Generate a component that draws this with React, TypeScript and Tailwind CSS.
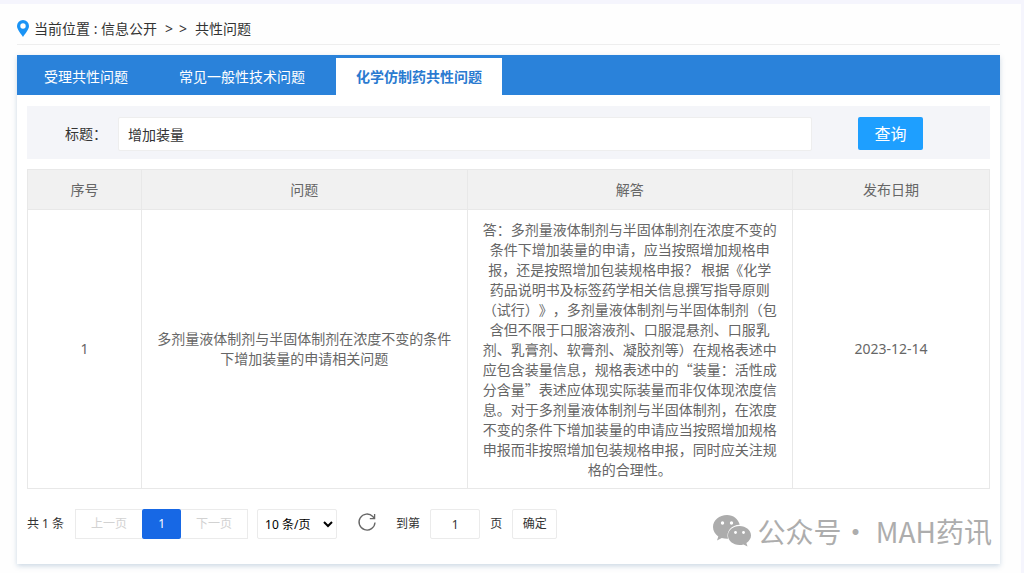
import { useState } from 'react';

interface QuestionRow {
  id: number;
  question: string;
  answer: string;
  publishDate: string;
}

const tabs = ['受理共性问题', '常见一般性技术问题', '化学仿制药共性问题'];

const rows: QuestionRow[] = [
  {
    id: 1,
    question: '多剂量液体制剂与半固体制剂在浓度不变的条件下增加装量的申请相关问题',
    answer:
      '答：多剂量液体制剂与半固体制剂在浓度不变的条件下增加装量的申请，应当按照增加规格申报，还是按照增加包装规格申报？ 根据《化学药品说明书及标签药学相关信息撰写指导原则（试行）》，多剂量液体制剂与半固体制剂（包含但不限于口服溶液剂、口服混悬剂、口服乳剂、乳膏剂、软膏剂、凝胶剂等）在规格表述中应包含装量信息，规格表述中的“装量：活性成分含量”表述应体现实际装量而非仅体现浓度信息。对于多剂量液体制剂与半固体制剂，在浓度不变的条件下增加装量的申请应当按照增加规格申报而非按照增加包装规格申报，同时应关注规格的合理性。',
    publishDate: '2023-12-14',
  },
];

function Breadcrumb() {
  return (
    <nav className="flex h-10 items-center border-b border-[#eeeeee] pt-2 text-sm text-[#333333]">
      <svg width="12" height="17" viewBox="0 0 12 17" className="mr-[5px]" aria-hidden="true">
        <path
          fillRule="evenodd"
          fill="#1a93f5"
          d="M6 0a6 6 0 0 1 6 6c0 3.6-4.2 8-6 11C4.200 14 0 9.600 0 6a6 6 0 0 1 6-6zm0 3.300a2.700 2.700 0 1 0 0 5.400 2.700 2.700 0 0 0 0-5.400z"
        />
      </svg>
      <span>当前位置 :&nbsp;</span>
      <a href="#info">信息公开</a>
      <span className="mx-2 flex gap-1.5">
        <span>&gt;</span>
        <span>&gt;</span>
      </span>
      <a href="#common">共性问题</a>
    </nav>
  );
}

function Pagination() {
  const [page, setPage] = useState('1');
  const [size, setSize] = useState('10');

  return (
    <div className="mt-5 flex h-[30px] items-center text-xs text-[#333333]">
      <span>共 1 条</span>
      <div className="ml-[11px] flex h-full">
        <button type="button" disabled className="w-[67px] border border-r-0 border-[#ebebeb] text-[#d2d2d2]">
          上一页
        </button>
        <button type="button" aria-current="page" className="w-[39px] rounded-xs bg-[#1768e5] text-white">
          1
        </button>
        <button type="button" disabled className="w-[67px] border border-l-0 border-[#ebebeb] text-[#d2d2d2]">
          下一页
        </button>
      </div>
      <select
        aria-label="每页条数"
        value={size}
        onChange={(e) => setSize(e.target.value)}
        className="ml-[9px] h-full w-20 rounded-xs border border-[#ebebeb] bg-white px-[3px] text-black"
      >
        <option value="10">10 条/页</option>
        <option value="20">20 条/页</option>
        <option value="50">50 条/页</option>
      </select>
      <button type="button" aria-label="刷新" className="mb-1 ml-5">
        <svg width="20" height="20" viewBox="0 0 20 20" fill="none" stroke="#666666" strokeWidth="1.3">
          <path d="M18 10.500A8 8 0 1 1 15.800 4.500L17.300 6.200" />
          <path d="M17.600 2v4.700h-4.800" />
        </svg>
      </button>
      <label htmlFor="jumpPage" className="ml-[19px]">
        到第
      </label>
      <input
        id="jumpPage"
        type="text"
        value={page}
        onChange={(e) => setPage(e.target.value)}
        className="mx-[10px] h-full w-[50px] rounded-xs border border-[#ebebeb] bg-white text-center"
      />
      <span>页</span>
      <button type="button" className="ml-[10px] h-full w-[45px] rounded-xs border border-[#ebebeb] bg-white">
        确定
      </button>
    </div>
  );
}

function Watermark() {
  return (
    <div className="absolute right-2 bottom-[13px] flex items-center font-['Noto_Sans_CJK_SC',sans-serif] text-[28px] leading-10 text-[#adadad]">
      <svg width="38" height="32" viewBox="0 0 38 32" className="mr-[7px]" aria-hidden="true">
        <path
          fill="#acacac"
          d="M14 0C6.300 0 0 5.200 0 12c0 3.900 2 7.200 5.300 9.500L4 25.500l4.800-2.500c1.700.5 3.400.8 5.200.8h1C12.800 16.500 18.500 10 26.700 9.800 25.500 4.200 20.300 0 14 0z"
        />
        <path
          fill="#acacac"
          d="M26.500 11C20 11 15 15.300 15 20.500S20 30 26.500 30c1.400 0 2.800-.2 4-.6L34.500 31.500l-1.100-3.600c2.800-1.800 4.600-4.500 4.600-7.400C38 15.300 33 11 26.500 11z"
        />
        <g fill="#ffffff">
          <circle cx="9.500" cy="8" r="1.700" />
          <circle cx="18.500" cy="8" r="1.700" />
          <circle cx="22.500" cy="17.500" r="1.400" />
          <circle cx="30.500" cy="17.500" r="1.400" />
        </g>
      </svg>
      <span>公众号· MAH药讯</span>
    </div>
  );
}

export default function App() {
  const [activeTab, setActiveTab] = useState(2);
  const [title, setTitle] = useState('增加装量');

  return (
    <div
      lang="zh-CN"
      className="bg-[#f5f5fd] pt-1 pr-[3px] font-['Noto_Sans','Noto_Sans_CJK_SC',sans-serif]"
    >
      <div className="bg-[#fefefe] pt-[1px] pr-[21px] pb-[10px] pl-[17px]">
        <Breadcrumb />

        <main className="relative mt-[10px] bg-white pb-[25px] shadow-[0_2px_5px_rgba(90,130,170,0.3)]">
          <div role="tablist" className="flex h-10 items-end gap-[11px] bg-[#2a82da] pl-[7px]">
            {tabs.map((tab, i) => (
              <button
                key={tab}
                type="button"
                role="tab"
                aria-selected={activeTab === i}
                onClick={() => setActiveTab(i)}
                className={`h-[37px] px-5 text-sm ${
                  activeTab === i ? 'bg-white font-bold text-[#2a7ad0]' : 'text-white'
                }`}
              >
                {tab}
              </button>
            ))}
          </div>

          <div className="px-[10px]">
            <form
              onSubmit={(e) => e.preventDefault()}
              className="mt-[11px] flex h-[53px] items-center bg-[#f4f5f9] pt-[2px] pr-[67px] pl-[38px] text-sm text-[#333333]"
            >
              <label htmlFor="title" className="w-[53px]">
                标题：
              </label>
              <input
                id="title"
                type="text"
                value={title}
                onChange={(e) => setTitle(e.target.value)}
                className="h-[34px] min-w-0 flex-1 rounded-xs border border-[#eeeeee] bg-white px-[9px]"
              />
              <button type="submit" className="ml-[46px] h-[33px] w-[65px] rounded-xs bg-[#1e9fff] text-base text-white">
                查询
              </button>
            </form>

            <table className="mt-[10px] w-full table-fixed border-collapse text-center text-sm text-[#666666]">
              <colgroup>
                <col className="w-[114px]" />
                <col />
                <col />
                <col className="w-[197px]" />
              </colgroup>
              <thead>
                <tr className="h-10 bg-[#f1f1f1]">
                  <th className="border border-[#e8e8e8] font-normal">序号</th>
                  <th className="border border-[#e8e8e8] font-normal">问题</th>
                  <th className="border border-[#e8e8e8] font-normal">解答</th>
                  <th className="border border-[#e8e8e8] font-normal">发布日期</th>
                </tr>
              </thead>
              <tbody>
                {rows.map((row) => (
                  <tr key={row.id}>
                    <td className="border border-[#e8e8e8]">{row.id}</td>
                    <td className="border border-[#e8e8e8] px-[15px] py-[9px]">{row.question}</td>
                    <td className="border border-[#e8e8e8] px-[15px] py-[9px] font-['Noto_Sans_CJK_SC',sans-serif] [text-spacing-trim:space-all]">
                      {row.answer}
                    </td>
                    <td className="border border-[#e8e8e8]">{row.publishDate}</td>
                  </tr>
                ))}
              </tbody>
            </table>

            <Pagination />
          </div>

          <Watermark />
        </main>
      </div>
    </div>
  );
}
